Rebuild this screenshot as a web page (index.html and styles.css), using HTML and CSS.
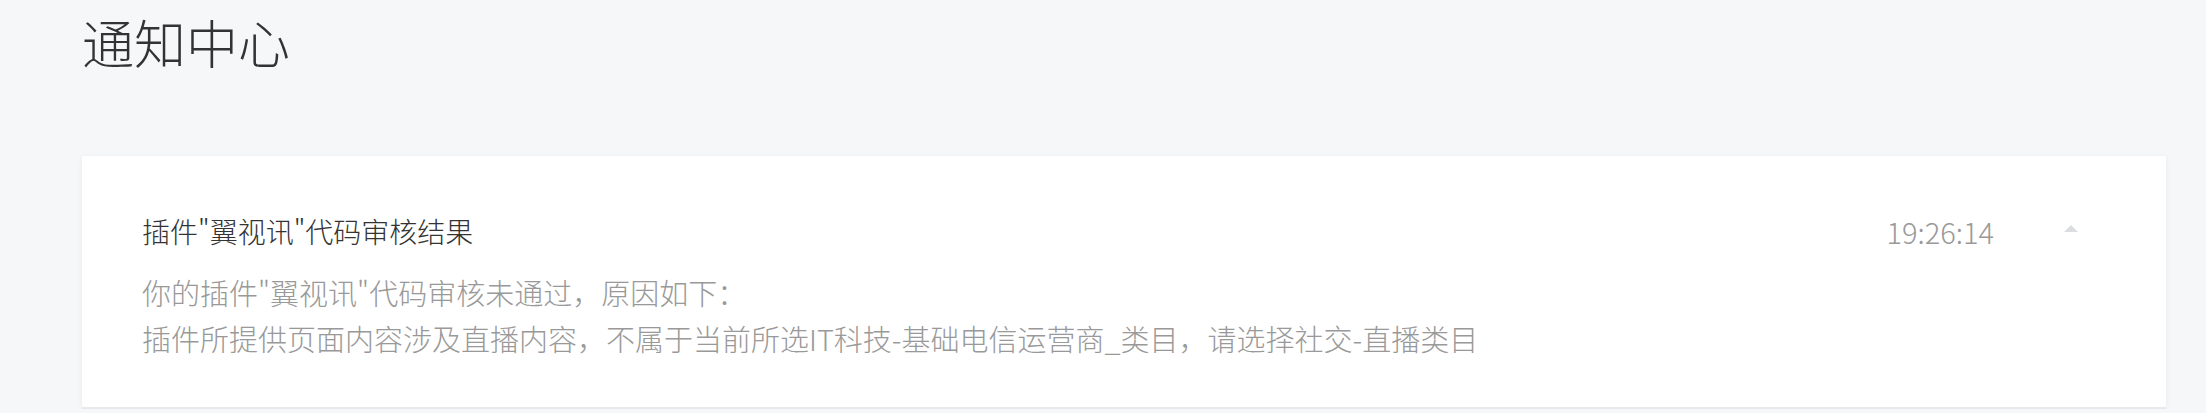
FILE: index.html
```html
<!DOCTYPE html>
<html lang="zh-CN">
<head>
    <meta charset="UTF-8">
    <meta name="viewport" content="width=device-width, initial-scale=1.0">
    <title>通知中心</title>
    <link rel="stylesheet" href="styles.css">
</head>
<body>
    <main class="page">
        <h1 class="page-title">通知中心</h1>
        <div class="notice">
            <div class="notice-head">
                <div class="notice-title">插件"翼视讯"代码审核结果</div>
                <div class="notice-time">19:26:14</div>
                <span class="notice-toggle"></span>
            </div>
            <div class="notice-body">
                <p>你的插件"翼视讯"代码审核未通过，原因如下：</p>
                <p>插件所提供页面内容涉及直播内容，不属于当前所选IT科技-基础电信运营商_类目，请选择社交-直播类目</p>
            </div>
        </div>
    </main>
</body>
</html>
```

FILE: styles.css
```css
body {
    margin: 0;
    background-color: #f6f7f9;
    font-family: "Noto Sans CJK SC", "Noto Sans", sans-serif;
    font-weight: 300;
}
.page {
    padding: 11px 40px 0 82px;
}
.page-title {
    margin: 0 0 83px 0;
    font-size: 52px;
    line-height: 62px;
    font-weight: 300;
    color: #333;
}
.notice {
    background-color: #fff;
    box-shadow: 0 1px 6px rgba(0, 0, 0, 0.06);
    border-bottom: 2px solid #e8e9ec;
    padding: 55px 88px 46px 60px;
}
.notice-head {
    display: flex;
    align-items: center;
}
.notice-title {
    flex: 1;
    font-size: 28px;
    line-height: 40px;
    color: #333;
}
.notice-time {
    font-size: 29px;
    line-height: 40px;
    color: #999;
    margin-right: 70px;
}
.notice-toggle {
    width: 0;
    height: 0;
    border-left: 7px solid transparent;
    border-right: 7px solid transparent;
    border-bottom: 7px solid #dcdde1;
    margin-top: -6px;
}
.notice-body {
    margin-top: 18px;
    font-size: 29px;
    line-height: 46px;
    color: #999;
}
.notice-body p {
    margin: 0;
}
```
